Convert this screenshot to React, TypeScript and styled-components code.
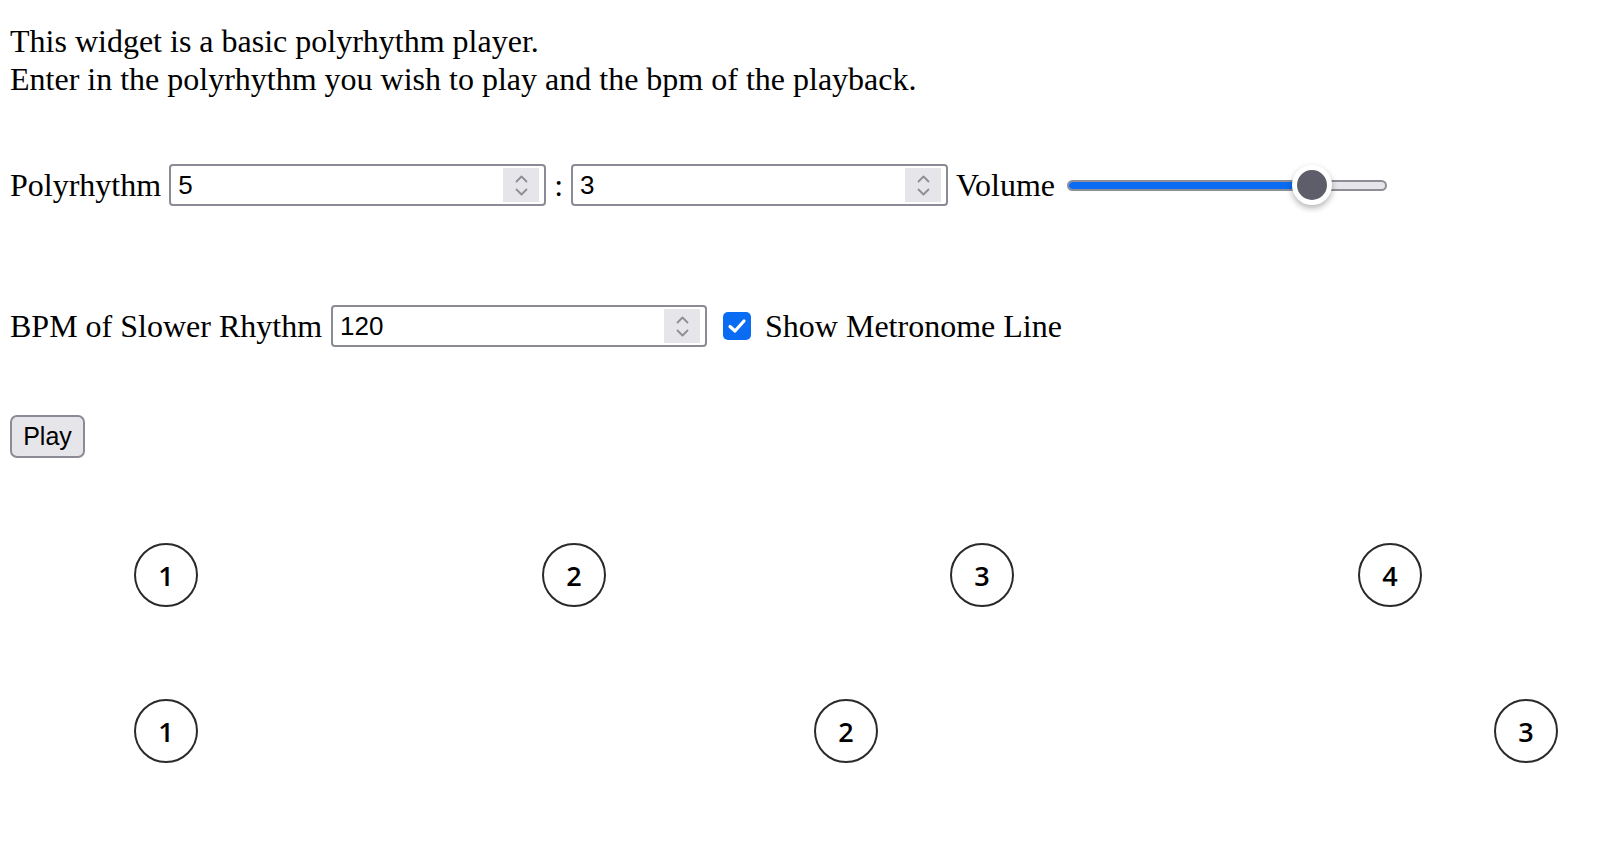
import * as React from "react";
import styled, { createGlobalStyle } from "styled-components";

const GlobalStyle = createGlobalStyle`
    html, body {
        margin: 0;
        padding: 0;
        background: #ffffff;
        overflow: hidden;
    }
    body {
        font-family: 'Liberation Serif', 'Times New Roman', serif;
        color: #000;
    }
`;

const PAGE_WIDTH = 1606;

const Page = styled.div`
    width: ${PAGE_WIDTH}px;
    height: 852px;
    overflow: hidden;
    padding: 22px 10px 0 10px;
    box-sizing: border-box;
`;

const Intro = styled.p`
    margin: 0;
    font-size: 32px;
    line-height: 38px;
`;

const ControlRow = styled.div<{ $top: number }>`
    display: flex;
    align-items: center;
    margin-top: ${(p) => p.$top}px;
    height: 42px;
`;

const Label = styled.span<{ $before?: number; $after?: number }>`
    font-size: 32px;
    white-space: nowrap;
    margin-left: ${(p) => p.$before ?? 0}px;
    margin-right: ${(p) => p.$after ?? 8}px;
`;

const Colon = styled.span`
    font-size: 32px;
    margin: 0 8px 0 8px;
`;

const NumberBox = styled.div<{ $width: number }>`
    display: flex;
    align-items: center;
    width: ${(p) => p.$width}px;
    height: 42px;
    box-sizing: border-box;
    border: 2px solid #8b8b96;
    border-radius: 4px;
    background: #fff;
    padding: 0 5px 0 7px;
`;

const NumberText = styled.input`
    flex: 1;
    min-width: 0;
    border: none;
    outline: none;
    background: transparent;
    padding: 0;
    font-family: 'Liberation Sans', Arial, sans-serif;
    font-size: 26px;
    color: #000;
`;

const Spinner = styled.div`
    width: 36px;
    height: 34px;
    background: #e5e5ea;
    display: flex;
    flex-direction: column;
    align-items: center;
    justify-content: center;
    gap: 5px;
`;

const SliderWrap = styled.div`
    position: relative;
    width: 320px;
    height: 42px;
    margin-left: 2px;
    display: flex;
    align-items: center;
`;

const Track = styled.div`
    width: 100%;
    height: 11px;
    box-sizing: border-box;
    border: 2px solid #8e8e99;
    border-radius: 6px;
    background: #e5e5ea;
    overflow: hidden;
    display: flex;
`;

const Fill = styled.div`
    height: 100%;
    background: #0a6cf2;
`;

const Thumb = styled.div`
    position: absolute;
    top: 50%;
    width: 40px;
    height: 40px;
    margin-top: -20px;
    margin-left: -20px;
    box-sizing: border-box;
    border: 5px solid #fff;
    border-radius: 50%;
    background: #5e5e6a;
    box-shadow: 0 3px 6px rgba(0, 0, 0, 0.3);
`;

const CheckBox = styled.div`
    width: 28px;
    height: 28px;
    border-radius: 5px;
    background: #0a6cf2;
    display: flex;
    align-items: center;
    justify-content: center;
    margin: 0 14px 0 16px;
`;

const PlayButton = styled.button`
    display: block;
    margin-top: 68px;
    width: 75px;
    height: 43px;
    box-sizing: border-box;
    border: 2px solid #8b8b96;
    border-radius: 7px;
    background: #e5e5ea;
    font-family: 'Liberation Sans', Arial, sans-serif;
    font-size: 25px;
    color: #000;
    padding: 0;
`;

const BeatRow = styled.div<{ $top: number }>`
    display: flex;
    margin-top: ${(p) => p.$top}px;
    margin-left: 124px;
`;

const BeatSlot = styled.div<{ $width: number }>`
    flex: 0 0 ${(p) => p.$width}px;
`;

const Beat = styled.div`
    width: 64px;
    height: 64px;
    box-sizing: border-box;
    border: 2px solid #2a2a2a;
    border-radius: 50%;
    display: flex;
    align-items: center;
    justify-content: center;
    font-family: 'Open Sans', 'Liberation Sans', sans-serif;
    font-weight: 600;
    font-size: 27px;
    color: #000;
`;

const Chevron = ({ up }: { up?: boolean }) => (
    <svg width="13" height="8" viewBox="0 0 13 8">
        <path
            d={up ? "M1.5 6.5 L6.5 1.5 L11.5 6.5" : "M1.5 1.5 L6.5 6.5 L11.5 1.5"}
            fill="none"
            stroke="#8e8e93"
            strokeWidth="1.8"
            strokeLinecap="round"
            strokeLinejoin="round"
        />
    </svg>
);

const NumberField = ({ value, width }: { value: string; width: number }) => (
    <NumberBox $width={width}>
        <NumberText defaultValue={value} />
        <Spinner>
            <Chevron up />
            <Chevron />
        </Spinner>
    </NumberBox>
);

export default function App() {
    const volume = 0.767;
    const fast = 5;
    const slow = 3;
    const measure = 2040;
    const rowStart = 134;

    // only the beats that land inside the visible page
    const beats = (count: number) => {
        var out = [];
        for (var i = 0; i < count; i++) {
            const slot = measure / count;
            if (rowStart + i * slot + 64 > PAGE_WIDTH) break;
            out.push(
                <BeatSlot key={i} $width={slot}>
                    <Beat>{i + 1}</Beat>
                </BeatSlot>
            );
        }
        return out;
    };

    return (
        <Page>
            <GlobalStyle />
            <Intro>
                This widget is a basic polyrhythm player.
                <br />
                Enter in the polyrhythm you wish to play and the bpm of the playback.
            </Intro>

            <ControlRow $top={66}>
                <Label>Polyrhythm</Label>
                <NumberField value="5" width={377} />
                <Colon>:</Colon>
                <NumberField value="3" width={377} />
                <Label $before={8} $after={10}>Volume</Label>
                <SliderWrap>
                    <Track>
                        <Fill style={{ width: `${volume * 100}%` }} />
                    </Track>
                    <Thumb style={{ left: `${volume * 100}%` }} />
                </SliderWrap>
            </ControlRow>

            <ControlRow $top={99}>
                <Label $after={9}>BPM of Slower Rhythm</Label>
                <NumberField value="120" width={376} />
                <CheckBox>
                    <svg width="20" height="16" viewBox="0 0 20 16">
                        <path d="M3 8.5 L8 13 L17 3" fill="none" stroke="#fff" strokeWidth="3.2" strokeLinecap="round" strokeLinejoin="round" />
                    </svg>
                </CheckBox>
                <Label>Show Metronome Line</Label>
            </ControlRow>

            <PlayButton>Play</PlayButton>

            <BeatRow $top={85}>{beats(fast)}</BeatRow>
            <BeatRow $top={92}>{beats(slow)}</BeatRow>
        </Page>
    );
}
